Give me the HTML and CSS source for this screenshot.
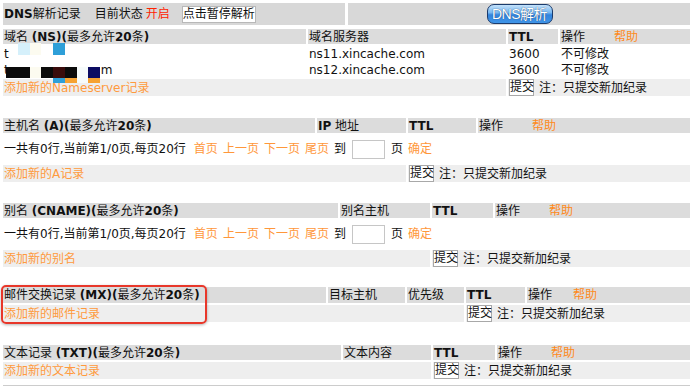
FILE: index.html
```html
<!DOCTYPE html>
<html lang="zh-CN">
<head>
<meta charset="utf-8">
<title>DNS解析记录</title>
<link rel="stylesheet" href="styles.css">
</head>
<body>
<div class="page">
  <div class="topbar">
    <div class="tcell t1">
      <span class="title"><b>DNS</b>解析记录</span>
      <span class="status">目前状态</span>
      <span class="on">开启</span>
      <button class="pause">点击暂停解析</button>
    </div>
    <div class="tcell t2"><button class="dnsbtn">DNS解析</button></div>
  </div>

  <div class="sec ns">
    <div class="c h"><span>域名 <b>(NS)(</b>最多允许<b>20</b>条<b>)</b></span></div>
    <div class="c h">域名服务器</div>
    <div class="c h"><b>TTL</b></div>
    <div class="c h">操作<span class="help">帮助</span></div>

    <div class="c">t</div>
    <div class="c">ns11.xincache.com</div>
    <div class="c">3600</div>
    <div class="c">不可修改</div>

    <div class="c"><span>t<span class="hid"></span>m</span></div>
    <div class="c">ns12.xincache.com</div>
    <div class="c">3600</div>
    <div class="c">不可修改</div>

    <div class="c ad span2"><span class="add">添加新的Nameserver记录</span></div>
    <div class="c ad span2"><button class="sub">提交</button><span class="note">注：只提交新加纪录</span></div>

    <div class="mask">
      <i></i><i class="cy"></i><i class="cr"></i><i></i><i class="bl"></i><i></i><i></i><i></i>
      <i></i><i></i><i></i><i></i><i></i><i></i><i></i><i></i>
      <i class="k"></i><i class="k"></i><i class="cr"></i><i class="k"></i><i class="br"></i><i class="k"></i><i class="wh"></i><i class="nv"></i>
      <i></i><i></i><i></i><i></i><i class="bl"></i><i class="or"></i><i class="wh"></i><i class="or"></i>
    </div>
  </div>

  <div class="sec arec">
    <div class="c h"><span>主机名 <b>(A)(</b>最多允许<b>20</b>条<b>)</b></span></div>
    <div class="c h"><span><b>IP</b> 地址</span></div>
    <div class="c h"><b>TTL</b></div>
    <div class="c h">操作<span class="help">帮助</span></div>

    <div class="c pager span4">
      <span>一共有0行,当前第1/0页,每页20行</span>
      <span class="lnk first">首页</span>
      <span class="lnk">上一页</span>
      <span class="lnk">下一页</span>
      <span class="lnk">尾页</span>
      <span>到</span>
      <span class="pin"></span>
      <span>页</span>
      <span class="lnk">确定</span>
    </div>

    <div class="c ad span2"><span class="add">添加新的A记录</span></div>
    <div class="c ad span2"><button class="sub">提交</button><span class="note">注：只提交新加纪录</span></div>
  </div>

  <div class="sec cname">
    <div class="c h"><span>别名 <b>(CNAME)(</b>最多允许<b>20</b>条<b>)</b></span></div>
    <div class="c h">别名主机</div>
    <div class="c h"><b>TTL</b></div>
    <div class="c h">操作<span class="help">帮助</span></div>

    <div class="c pager span4">
      <span>一共有0行,当前第1/0页,每页20行</span>
      <span class="lnk first">首页</span>
      <span class="lnk">上一页</span>
      <span class="lnk">下一页</span>
      <span class="lnk">尾页</span>
      <span>到</span>
      <span class="pin"></span>
      <span>页</span>
      <span class="lnk">确定</span>
    </div>

    <div class="c ad span2"><span class="add">添加新的别名</span></div>
    <div class="c ad span2"><button class="sub">提交</button><span class="note">注：只提交新加纪录</span></div>
  </div>

  <div class="sec mx">
    <div class="c h"><span>邮件交换记录 <b>(MX)(</b>最多允许<b>20</b>条<b>)</b></span></div>
    <div class="c h">目标主机</div>
    <div class="c h">优先级</div>
    <div class="c h"><b>TTL</b></div>
    <div class="c h">操作<span class="help help-mx">帮助</span></div>

    <div class="c ad span3"><span class="add">添加新的邮件记录</span></div>
    <div class="c ad span2"><button class="sub">提交</button><span class="note">注：只提交新加纪录</span></div>

    <div class="mark"></div>
  </div>

  <div class="sec txt">
    <div class="c h"><span>文本记录 <b>(TXT)(</b>最多允许<b>20</b>条<b>)</b></span></div>
    <div class="c h">文本内容</div>
    <div class="c h"><b>TTL</b></div>
    <div class="c h">操作<span class="help">帮助</span></div>

    <div class="c ad span2"><span class="add">添加新的文本记录</span></div>
    <div class="c ad span2"><button class="sub">提交</button><span class="note">注：只提交新加纪录</span></div>
  </div>

  <div class="endline"></div>
</div>
</body>
</html>
```

FILE: styles.css
```css
* { box-sizing: border-box; }
html, body { margin: 0; padding: 0; background: #fff; }
body {
  font-family: "DejaVu Sans", "Noto Sans CJK SC", sans-serif;
  font-size: 12px;
  line-height: 14px;
  color: #111;
}
b { font-weight: bold; }
button { font-family: inherit; font-size: 12px; color: #111; }

.page { padding: 3px 4px 0 3px; width: 694px; }

/* top bar */
.topbar {
  display: grid;
  grid-template-columns: 342px 342px;
  column-gap: 3px;
  height: 22px;
}
.tcell { background: #d8d8d8; display: flex; align-items: center; }
.t1 { padding-left: 1px; }
.status { margin-left: 14px; }
.on { color: #ff2200; margin-left: 3px; }
.pause {
  margin-left: 12px;
  height: 17px;
  padding: 0;
  background: #fff;
  border: 1px solid #b8b8b8;
  line-height: 15px;
}
.t2 { justify-content: center; }
.dnsbtn {
  width: 66px;
  height: 20px;
  padding: 0;
  margin-left: 1px;
  border: 1px solid #1b3b6c;
  border-radius: 7px;
  background: linear-gradient(#c4e2fb 0%, #79b8f0 42%, #3384dc 55%, #3f95e8 100%);
  color: #fff;
  font-family: "Liberation Sans", "Noto Sans CJK SC", sans-serif;
  font-size: 14px;
  letter-spacing: -0.5px;
  line-height: 18px;
  text-shadow: 0 0 1px #0e2e62;
}

/* sections */
.sec { display: grid; gap: 2px; position: relative; }
.c {
  display: flex;
  align-items: center;
  padding-left: 1px;
  white-space: nowrap;
  overflow: hidden;
}
.h { background: #dcdcdc; }
.ad { background: #eeeeee; }
.span2 { grid-column: span 2; }
.span3 { grid-column: span 3; }
.span4 { grid-column: span 4; }

.help { color: #ff8a1c; margin-left: 29px; }
.help-mx { margin-left: 21px; }
.add { color: #ff9a3d; }
.lnk { color: #ff973a; }

.sub {
  width: 25px;
  height: 17px;
  padding: 0;
  background: #fff;
  border: 1px solid #a8a8a8;
  line-height: 15px;
}
.note { margin-left: 5px; }

.ns {
  margin-top: 4px;
  grid-template-columns: 303px 198px 50px 130px;
  grid-template-rows: 15px 15px 14px 17px;
}
.hid { display: inline-block; width: 92px; }

.mask {
  position: absolute;
  left: 3px;
  top: 14px;
  display: grid;
  grid-template-columns: repeat(8, 11.75px);
  grid-template-rows: 12px 12px 11px 5px;
  pointer-events: none;
}
.mask i { display: block; }
.mask .cy { background: #d5f0fb; }
.mask .cr { background: #fcfbf0; }
.mask .bl { background: #2e9fd8; }
.mask .k { background: #0b0b0b; }
.mask .br { background: #3a0c0c; }
.mask .wh { background: #f6fbfb; }
.mask .nv { background: #0c0c62; }
.mask .or { background: #f6a232; }

.arec {
  margin-top: 22px;
  grid-template-columns: 312px 89px 68px 212px;
  grid-template-rows: 15px 28px 17px;
}
.cname {
  margin-top: 21px;
  grid-template-columns: 335px 90px 61px 195px;
  grid-template-rows: 15px 28px 17px;
}
.pager { gap: 5px; }
.pager .first { margin-left: 3px; }
.pin {
  display: inline-block;
  width: 33px;
  height: 19px;
  border: 1px solid #c6c6c6;
  background: #fff;
  margin: 0 1px;
}

.mx {
  margin-top: 20px;
  grid-template-columns: 323px 77px 57px 59px 163px;
  grid-template-rows: 16px 17px;
}
.mark {
  position: absolute;
  left: -2px;
  top: -2px;
  width: 206px;
  height: 39px;
  border: 2px solid #e8372a;
  border-radius: 5px;
  box-shadow: 0 1px 3px rgba(0, 0, 0, 0.3);
  pointer-events: none;
}

.txt {
  margin-top: 23px;
  grid-template-columns: 338px 88px 62px 193px;
  grid-template-rows: 15px 17px;
}
.endline { margin-top: 6px; height: 1px; background: #cccccc; }
```
